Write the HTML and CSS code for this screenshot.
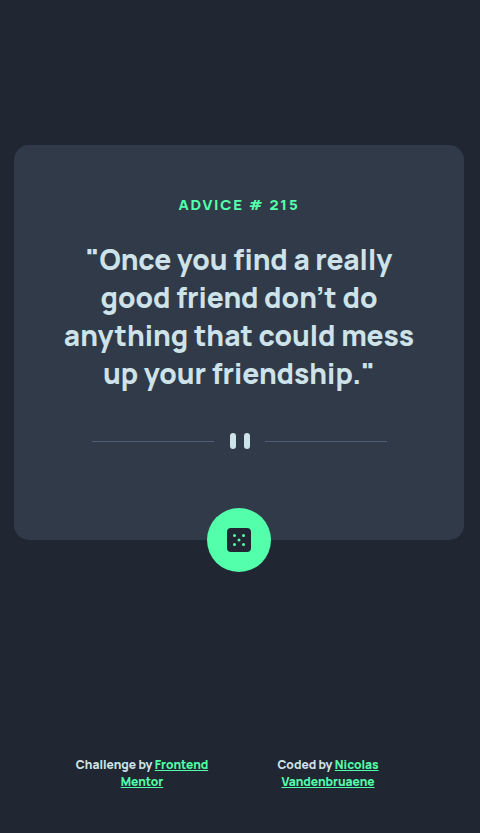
FILE: index.html
```html
<!DOCTYPE html>
<html lang="en">
<head>
  <meta charset="utf-8">
  <meta name="viewport" content="width=device-width, initial-scale=1">
  <title>Advice generator</title>
  <link rel="stylesheet" href="styles.css">
</head>
<body>
  <main class="card">
    <h1 class="card-title">Advice # 215</h1>
    <p class="quote">"Once you find a really good friend don’t do anything that could mess up your friendship."</p>
    <svg class="divider" viewBox="0 0 295 16" aria-hidden="true">
      <path fill="#4F5D74" d="M0 8h122v1H0zM173 8h122v1H173z"/>
      <g fill="#CEE3E9">
        <rect x="138" width="6" height="16" rx="3"/>
        <rect x="152" width="6" height="16" rx="3"/>
      </g>
    </svg>
    <button class="dice" type="button" aria-label="New advice">
      <svg viewBox="0 0 24 24" width="24" height="24" aria-hidden="true">
        <path fill="#202733" d="M20 0H4a4.005 4.005 0 0 0-4 4v16a4.005 4.005 0 0 0 4 4h16a4.005 4.005 0 0 0 4-4V4a4.005 4.005 0 0 0-4-4ZM7.500 18a1.500 1.500 0 1 1 0-3 1.500 1.500 0 0 1 0 3Zm0-9a1.500 1.500 0 1 1 0-3 1.500 1.500 0 0 1 0 3Zm4.500 4.500a1.500 1.500 0 1 1 0-3 1.500 1.500 0 0 1 0 3Zm4.500 4.500a1.500 1.500 0 1 1 0-3 1.500 1.500 0 0 1 0 3Zm0-9a1.500 1.500 0 1 1 0-3 1.500 1.500 0 0 1 0 3Z"/>
      </svg>
    </button>
  </main>
  <footer class="credits">
    <p class="credit">Challenge by <a href="#">Frontend Mentor</a></p>
    <p class="credit">Coded by <a href="#">Nicolas Vandenbruaene</a></p>
  </footer>
</body>
</html>
```
FILE: styles.css
```css
* {
  box-sizing: border-box;
  margin: 0;
}

body {
  display: flex;
  flex-direction: column;
  min-height: 100vh;
  padding: 0 16px 0 14px;
  background: #202733;
  color: #cee3e9;
  font-family: Manrope, Inter, "Liberation Sans", sans-serif;
  font-weight: 800;
}

.card {
  position: relative;
  display: flex;
  flex-direction: column;
  align-items: center;
  width: 100%;
  max-width: 540px;
  margin: auto;
  padding: 50px 40px 91px;
  border-radius: 15px;
  background: #313a48;
  text-align: center;
}

.card-title {
  color: #53ffaa;
  font-size: 15px;
  font-weight: 800;
  line-height: 20px;
  letter-spacing: 0.12em;
  text-transform: uppercase;
}

.quote {
  margin: 25px 0 41px;
  font-size: 28px;
  line-height: 38px;
}

.divider {
  width: 295px;
  max-width: 100%;
  height: 16px;
}

.dice {
  position: absolute;
  bottom: -32px;
  left: 50%;
  display: grid;
  place-items: center;
  width: 64px;
  height: 64px;
  margin-left: -32px;
  padding: 0;
  border: 0;
  border-radius: 50%;
  background: #53ffaa;
  cursor: pointer;
}

.dice:hover {
  box-shadow: 0 0 32px #53ffaa;
}

.credits {
  display: flex;
  justify-content: center;
  gap: 36px;
  margin-top: 72px;
  padding: 0 8px 43px 0;
  font-size: 12px;
  line-height: 17px;
  text-align: center;
}

.credit {
  width: 150px;
}

.credit a {
  color: #53ffaa;
}
```
